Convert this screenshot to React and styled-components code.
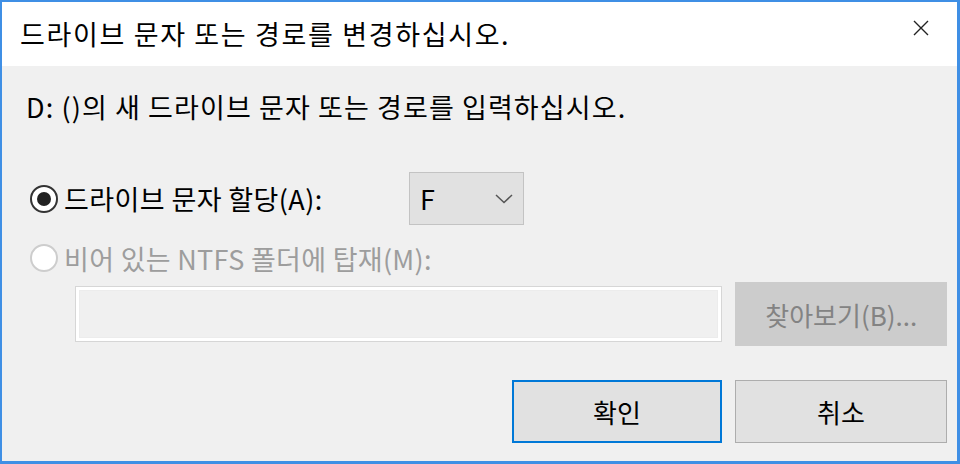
import React from 'react'
import styled, { createGlobalStyle } from 'styled-components'

const GlobalStyle = createGlobalStyle`
  html, body {
    margin: 0;
    padding: 0;
    background: #f0f0f0;
  }
  body {
    font-family: "Noto Sans CJK KR", "Noto Sans", sans-serif;
  }
`

const Window = styled.div`
  width: 960px;
  height: 464px;
  box-sizing: border-box;
  border: solid #3f8fe5;
  border-width: 2px 3px 3px 2px;
  display: flex;
  flex-direction: column;
  background: #f0f0f0;
  color: #000;
`

const TitleBar = styled.div`
  height: 64px;
  flex: none;
  background: #fff;
  display: flex;
  justify-content: space-between;
  align-items: center;
  padding-left: 18px;
`

const Title = styled.h1`
  margin: 0;
  font-size: 27px;
  font-weight: 400;
  line-height: 36px;
  letter-spacing: 1.65px;
`

const CloseButton = styled.button`
  align-self: flex-start;
  width: 72px;
  height: 52px;
  padding: 0;
  border: 0;
  background: none;
  display: flex;
  align-items: center;
  justify-content: center;
`

const Body = styled.div`
  flex: 1;
  display: flex;
  flex-direction: column;
  padding: 0 10px 0 24px;
`

const Prompt = styled.p`
  margin: 23px 0 0;
  font-size: 27px;
  line-height: 36px;
  letter-spacing: 1.1px;
`

const AssignRow = styled.div`
  margin-top: 47px;
  display: grid;
  grid-template-columns: 383px 115px;
  align-items: center;
`

const Option = styled.label`
  display: flex;
  align-items: center;
  gap: 6px;
  padding-left: 4px;
  height: 30px;
  font-size: 27px;
  letter-spacing: ${p => (p.$disabled ? 0.3 : 0.4)}px;
  color: ${p => (p.$disabled ? '#9d9d9d' : '#000')};
  margin-top: ${p => p.$top || 0}px;
`

const Radio = styled.span`
  width: 28px;
  height: 28px;
  box-sizing: border-box;
  border-radius: 50%;
  border: 2px solid ${p => (p.$disabled ? '#cdcdcd' : '#333')};
  background: #fff;
  display: flex;
  align-items: center;
  justify-content: center;
  flex: none;

  &::after {
    content: '';
    width: 14px;
    height: 14px;
    border-radius: 50%;
    background: #222;
    display: ${p => (p.$checked ? 'block' : 'none')};
  }
`

const Combo = styled.div`
  height: 53px;
  box-sizing: border-box;
  border: 1px solid #c3c3c3;
  background: #e1e1e1;
  display: flex;
  align-items: center;
  justify-content: space-between;
  padding: 0 10px 0 10px;
  font-size: 27px;
`

const PathRow = styled.div`
  margin-top: 9px;
  display: flex;
  align-items: center;
  gap: 13px;
  padding-left: 49px;
`

const PathInput = styled.div`
  width: 649px;
  height: 56px;
  box-sizing: border-box;
  border: 1px solid #d6d6d6;
  background: #f0f0f0;
  box-shadow: inset 0 0 0 3px #fff, inset 0 0 0 4px #ececec;
`

const Button = styled.button`
  width: ${p => p.$width}px;
  height: ${p => p.$height}px;
  box-sizing: border-box;
  font-family: inherit;
  font-size: 26px;
  padding: 0;
  color: ${p => (p.$disabled ? '#838383' : '#000')};
  background: ${p => (p.$disabled ? '#cccccc' : '#e1e1e1')};
  border: ${p => (p.$primary ? '2px solid #0078d7' : p.$disabled ? '1px solid #cccccc' : '1px solid #adadad')};
`

const Footer = styled.div`
  margin-top: 34px;
  display: flex;
  justify-content: flex-end;
  gap: 13px;
`

export default function App() {
  return (
    <>
      <GlobalStyle />
      <Window>
        <TitleBar>
          <Title>드라이브 문자 또는 경로를 변경하십시오.</Title>
          <CloseButton aria-label="닫기">
            <svg width="16" height="16" viewBox="0 0 16 16">
              <path d="M1 1 L15 15 M15 1 L1 15" stroke="#222" strokeWidth="1.4" fill="none" />
            </svg>
          </CloseButton>
        </TitleBar>
        <Body>
          <Prompt>D: ()의 새 드라이브 문자 또는 경로를 입력하십시오.</Prompt>
          <AssignRow>
            <Option>
              <Radio $checked />
              드라이브 문자 할당(A):
            </Option>
            <Combo>
              F
              <svg width="18" height="10" viewBox="0 0 18 10">
                <polyline points="1,1 9,8.5 17,1" stroke="#555" strokeWidth="1.5" fill="none" />
              </svg>
            </Combo>
          </AssignRow>
          <Option $disabled $top={18}>
            <Radio $disabled />
            비어 있는 NTFS 폴더에 탑재(M):
          </Option>
          <PathRow>
            <PathInput />
            <Button $width={212} $height={64} $disabled>찾아보기(B)...</Button>
          </PathRow>
          <Footer>
            <Button $width={210} $height={63} $primary>확인</Button>
            <Button $width={212} $height={63}>취소</Button>
          </Footer>
        </Body>
      </Window>
    </>
  )
}
